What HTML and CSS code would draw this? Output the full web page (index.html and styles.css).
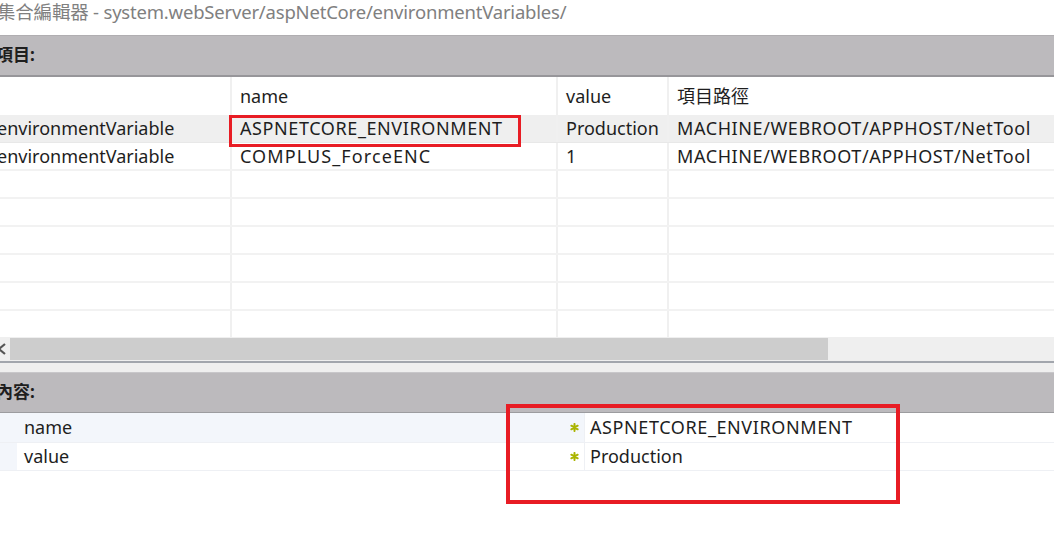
FILE: index.html
```html
<!DOCTYPE html>
<html lang="zh-Hant">
<head>
<meta charset="utf-8">
<link rel="stylesheet" href="styles.css">
</head>
<body>
<div class="page">
  <div class="title">集合編輯器 - system.webServer/aspNetCore/environmentVariables/</div>
  <div class="section-head">項目:</div>
  <div class="grid">
    <div class="row head">
      <div class="cell c1"></div>
      <div class="cell c2">name</div>
      <div class="cell c3">value</div>
      <div class="cell c4">項目路徑</div>
    </div>
    <div class="row sel">
      <div class="cell c1">environmentVariable</div>
      <div class="cell c2 caps">ASPNETCORE_ENVIRONMENT</div>
      <div class="cell c3">Production</div>
      <div class="cell c4 caps">MACHINE/WEBROOT/APPHOST/NetTool</div>
    </div>
    <div class="row">
      <div class="cell c1">environmentVariable</div>
      <div class="cell c2 caps-wide">COMPLUS_ForceENC</div>
      <div class="cell c3">1</div>
      <div class="cell c4 caps">MACHINE/WEBROOT/APPHOST/NetTool</div>
    </div>
    <div class="row"><div class="cell c1"></div><div class="cell c2"></div><div class="cell c3"></div><div class="cell c4"></div></div>
    <div class="row"><div class="cell c1"></div><div class="cell c2"></div><div class="cell c3"></div><div class="cell c4"></div></div>
    <div class="row"><div class="cell c1"></div><div class="cell c2"></div><div class="cell c3"></div><div class="cell c4"></div></div>
    <div class="row"><div class="cell c1"></div><div class="cell c2"></div><div class="cell c3"></div><div class="cell c4"></div></div>
    <div class="row"><div class="cell c1"></div><div class="cell c2"></div><div class="cell c3"></div><div class="cell c4"></div></div>
    <div class="row last"><div class="cell c1"></div><div class="cell c2"></div><div class="cell c3"></div><div class="cell c4"></div></div>
    <div class="hscroll">
      <div class="arrow"><svg width="10" height="12" viewBox="0 0 10 12"><path d="M8 1 L2 6 L8 11" fill="none" stroke="#555" stroke-width="2.2"/></svg></div>
      <div class="thumb"></div>
    </div>
    <div class="mark mark1"></div>
  </div>
  <div class="splitter"></div>
  <div class="section-head second">內容:</div>
  <div class="props">
    <div class="prow psel">
      <div class="pname">name</div>
      <div class="pval caps"><span class="star"><svg width="9" height="9" viewBox="0 0 10 10"><g stroke="#aab400" stroke-width="2.2" stroke-linecap="round"><path d="M5 1v8M1.5 3l7 4M8.5 3l-7 4"/></g></svg></span>ASPNETCORE_ENVIRONMENT</div>
    </div>
    <div class="prow">
      <div class="pname">value</div>
      <div class="pval"><span class="star"><svg width="9" height="9" viewBox="0 0 10 10"><g stroke="#aab400" stroke-width="2.2" stroke-linecap="round"><path d="M5 1v8M1.5 3l7 4M8.5 3l-7 4"/></g></svg></span>Production</div>
    </div>
    <div class="mark mark2"></div>
  </div>
</div>
</body>
</html>
```
FILE: styles.css
```css
html, body {
  margin: 0;
  padding: 0;
  background: #ffffff;
}
body {
  width: 1054px;
  height: 553px;
  overflow: hidden;
  font-family: "Noto Sans", "Noto Sans CJK TC", sans-serif;
  color: #1e1e1e;
}
.page {
  display: flex;
  flex-direction: column;
  width: 1054px;
}
.title {
  height: 35px;
  box-sizing: border-box;
  line-height: 24px;
  font-size: 18.5px;
  color: #808080;
  margin-left: -3px;
  white-space: nowrap;
  letter-spacing: -0.2px;
}
.section-head {
  height: 42px;
  box-sizing: border-box;
  background: #bcbabd;
  border-top: 1px solid #b0aeb1;
  border-bottom: 2px solid #97969a;
  font-weight: bold;
  font-size: 17px;
  line-height: 38px;
  margin-left: -4px;
}
.section-head.second {
  height: 41px;
  border-top: 1px solid #c8c7ca;
  border-bottom: 1px solid #9c9c9f;
}
.grid {
  position: relative;
  display: flex;
  flex-direction: column;
}
.row {
  display: grid;
  grid-template-columns: 232px 326px 111px 1fr;
  height: 28px;
  box-sizing: border-box;
  border-bottom: 2px solid #f2f2f2;
  font-size: 18px;
  line-height: 26px;
}
.row.head {
  height: 38px;
  line-height: 38px;
  border-bottom: none;
}
.row.sel {
  background: #efefef;
  border-bottom: 1px solid #e8e8e8;
}
.row.last {
  height: 26px;
  border-bottom: none;
}
.cell {
  box-sizing: border-box;
  border-right: 2px solid #f0f0f0;
  padding-left: 8px;
  white-space: nowrap;
  overflow: hidden;
}
.cell.c1 {
  padding-left: 0;
  text-indent: -3px;
}
.cell.c4 {
  border-right: none;
}
.caps {
  letter-spacing: 0.6px;
}
.caps-wide {
  letter-spacing: 1.1px;
}
.hscroll {
  height: 24px;
  background: #efefef;
  display: flex;
  align-items: stretch;
  padding: 1px 0 1px 0;
  box-sizing: border-box;
}
.arrow {
  width: 13px;
  display: flex;
  align-items: center;
  justify-content: flex-start;
  margin-left: -3px;
}
.thumb {
  width: 818px;
  background: #cdcdcd;
}
.splitter {
  height: 11px;
  box-sizing: border-box;
  border-top: 2px solid #a2a6ad;
  background: #efefef;
}
.props {
  position: relative;
  display: flex;
  flex-direction: column;
}
.prow {
  display: grid;
  grid-template-columns: 585px 1fr;
  height: 28px;
  box-sizing: border-box;
  border-bottom: 1px solid #eef0f4;
  font-size: 18px;
  line-height: 27px;
  background: linear-gradient(to right, #f3f6fb 17px, #ffffff 17px);
}
.prow.psel {
  height: 30px;
  line-height: 29px;
  background: #f3f6fb;
}
.pname {
  padding-left: 24px;
  border-right: 1px solid #eef0f4;
}
.pval {
  position: relative;
  background: #ffffff;
  padding-left: 5px;
  white-space: nowrap;
}
.star {
  position: absolute;
  left: -15px;
  top: 0;
  display: flex;
  align-items: center;
  height: 100%;
}
.mark {
  position: absolute;
  box-sizing: border-box;
  border: 4px solid #e81c24;
  pointer-events: none;
}
.mark1 {
  left: 229px;
  top: 38px;
  width: 292px;
  height: 32px;
  border-width: 3px;
}
.mark2 {
  left: 506px;
  top: -9px;
  width: 394px;
  height: 100px;
}
```
